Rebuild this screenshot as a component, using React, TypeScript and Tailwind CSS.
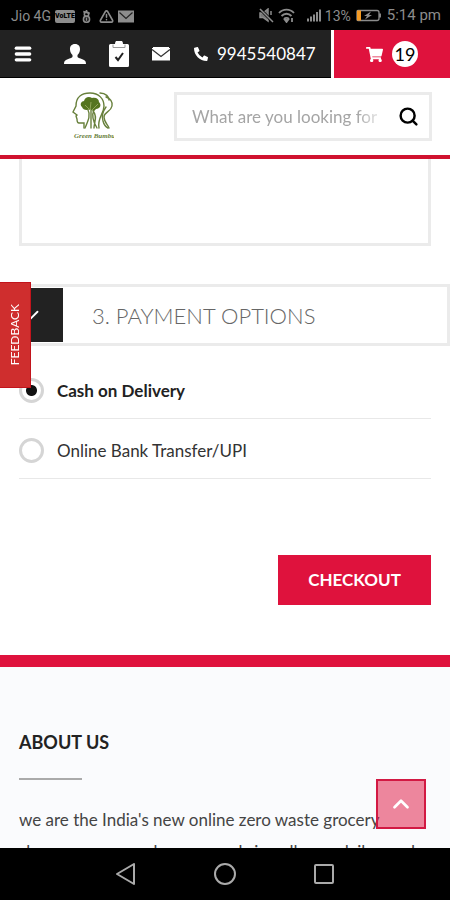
import { Menu, Search, ChevronUp, Check, TriangleAlert } from "lucide-react";
import { FaPhoneAlt, FaShoppingCart } from "react-icons/fa";

function StatusBar() {
  return (
    <div className="flex h-[30px] shrink-0 items-center justify-between bg-black pl-[11px] pr-[9px] pt-[2px] font-[Roboto,sans-serif] text-sm text-[#8c8c8c]">
      <div className="flex items-center">
        <span>Jio 4G</span>
        <span className="ml-1 flex h-[13px] w-5 items-center justify-center rounded-xs bg-[#8c8c8c] text-[7px] font-black text-black">
          VoLTE
        </span>
        <svg className="ml-[6px] h-[13px] w-[11px]" viewBox="0 0 10 12" fill="none" stroke="currentColor" strokeWidth="1.5">
          <path d="M5 0v2M2 1.5 8 3" />
          <circle cx="5" cy="4" r="2" />
          <circle cx="5" cy="8.5" r="2.8" />
          <path d="M5 7v3" />
        </svg>
        <TriangleAlert className="ml-[7px] size-[15px]" strokeWidth={2.5} />
        <svg className="ml-1 h-[13px] w-4" viewBox="0 0 16 12">
          <path d="M0 0h16v12H0z" fill="#8c8c8c" />
          <path d="m1.500 2 6.500 6 6.500-6" fill="none" stroke="#222" strokeWidth="1.2" />
        </svg>
      </div>
      <div className="flex items-center">
        <svg className="h-[15px] w-[15px]" viewBox="0 0 15 15" fill="none" stroke="currentColor" strokeWidth="1.5">
          <path d="M1 5h3l5-4v12L4 9.500H1z" fill="#777" />
          <path d="m1 1 13 13" stroke="#000" strokeWidth="3" />
          <path d="m1 1 13 13M12 3v4" />
        </svg>
        <svg className="ml-1 h-[15px] w-[17px]" viewBox="0 0 17 15" fill="none" stroke="currentColor" strokeWidth="1.8">
          <path d="M1 5C5 .5 12 .5 16 5M3.500 8c3-3 7-3 10 0M6 11c1.500-1.500 3.500-1.500 5 0" />
          <path d="m8.500 14-1.500-2h3zM14 10v4" fill="currentColor" />
        </svg>
        <svg className="ml-3 h-[13px] w-[14px]" viewBox="0 0 14 12" fill="currentColor">
          <path d="M0 9h2v3H0zM3 7h2v5H3zM6 5h2v7H6zM9 2.500h2V12H9zM12 0h2v12h-2z" />
        </svg>
        <span className="ml-1">13%</span>
        <svg className="ml-[5px] h-[13px] w-[25px]" viewBox="0 0 25 12">
          <path
            d="M2 1h19a2 2 0 0 1 2 2v6a2 2 0 0 1-2 2H2a1 1 0 0 1-1-1V2a1 1 0 0 1 1-1zM24.300 4v4"
            fill="none"
            stroke="#8c8c8c"
            strokeWidth="1.3"
          />
          <path d="M1 1h4v10H1z" fill="#f59a23" />
          <path d="M15 2 8 6.500h3L9 10l7-4.500h-3z" fill="#8c8c8c" />
        </svg>
        <span className="ml-[6px] text-[15px]">5:14 pm</span>
      </div>
    </div>
  );
}

function TopBar() {
  return (
    <div className="flex h-12 shrink-0 bg-[#222] text-white">
      <nav className="flex flex-1 items-center border-b border-black pl-[13px]">
        <button aria-label="Menu">
          <Menu size={20} strokeWidth={4} />
        </button>
        <a href="#account" aria-label="Account" className="ml-[31px]">
          <svg className="h-5 w-[22px]" viewBox="0 0 22 20" fill="currentColor">
            <path d="M11 0c3.500 0 5.200 2.300 5 5.500-.1 2.500-1.200 4.200-2.500 5.500v2c1.500 1.300 4.500 2 6.500 3 1.500.8 2 2 2 4H0c0-2 .5-3.200 2-4 2-1 5-1.700 6.500-3v-2C7.200 9.700 6.100 8 6 5.500 5.800 2.300 7.500 0 11 0z" />
          </svg>
        </a>
        <a href="#orders" aria-label="Orders" className="ml-[23px]">
          <svg className="h-[26px] w-5" viewBox="0 0 20 26" fill="currentColor">
            <path d="M1.500 3H6a4 4 0 0 1 8 0h4.500A1.500 1.500 0 0 1 20 4.500v20a1.500 1.500 0 0 1-1.500 1.500h-17A1.500 1.500 0 0 1 0 24.500v-20A1.500 1.500 0 0 1 1.500 3z" />
            <path d="M4 3.500v3h12v-3" fill="none" stroke="#999" />
            <path d="m6.500 16 2.500 3 5-7" fill="none" stroke="#222" strokeWidth="2" />
          </svg>
        </a>
        <a href="#mail" aria-label="Mail" className="ml-[23px]">
          <svg className="h-[14px] w-[18px]" viewBox="0 0 18 14">
            <path d="M1 0h16v1H1zM0 1h18v12.500H0z" fill="#fff" />
            <path d="m0 2.500 9 7 9-7" fill="none" stroke="#333" strokeWidth="1.3" />
          </svg>
        </a>
        <a href="tel:9945540847" className="ml-6 flex items-center gap-[9px] text-[17px]">
          <FaPhoneAlt size={14} className="-scale-x-100 rotate-90" />
          9945540847
        </a>
      </nav>
      <a
        href="#cart"
        aria-label="Cart, 19 items"
        className="flex w-[119px] items-center justify-center gap-[9px] border-l-3 border-white bg-[#df123d]"
      >
        <FaShoppingCart size={17} />
        <span className="flex size-[26px] items-center justify-center rounded-full bg-white text-lg text-black">
          19
        </span>
      </a>
    </div>
  );
}

function Logo() {
  return (
    <svg className="h-[50px] w-[42px] shrink-0" viewBox="0 0 42 50" fill="none" role="img" aria-label="Green Bumbu">
      <g stroke="#68803c" strokeLinecap="round" strokeWidth="1.4">
        <path d="M12 36v-5H7c-2 0-2-2-2-4l-1-3 1-1-4-3 3-6C4 5 10 1 18 1c9 0 14 6 14 13 0 8-7 12-5 22" />
        <path d="M28 1c6 0 9 4 9 7M34 5c4 1 7 5 6 9-1 6-8 6-8 11s4 8 5 11" />
        <path d="M34 15c-3 4-5 8-3 14 1 4 3 6 5 7" />
        <path d="M16 18c3 5 0 11-3 18M19 18v18M22 18c-3 6 0 13 3 18M21 19c5 5 1 12 1 17" />
      </g>
      <path d="M10 15c-3-3 0-6 2-6 1-4 5-5 8-3 4-1 7 1 7 4 3 3 1 7-3 7-2 3-5 1-6 0-3 2-7 1-8-2z" fill="#55751f" />
      <path d="m13 13 5 5 1-8m1 8 6-6" stroke="#91a75a" />
      <text x="2" y="46" fill="#68803c" fontFamily="Liberation Serif, serif" fontSize="7" fontStyle="italic" fontWeight="700">
        Green Bumbu
      </text>
    </svg>
  );
}

function SearchBar() {
  return (
    <header className="flex h-[81px] shrink-0 items-center border-b-4 border-[#d0122f] bg-white pl-[72px] pr-[18px]">
      <Logo />
      <form className="ml-[60px] flex h-[49px] min-w-0 flex-1 items-center border-3 border-[#ebebeb] pl-[15px] pr-[10px]">
        <input
          aria-label="Search"
          placeholder="What are you looking for"
          className="min-w-0 flex-1 mask-r-from-85% text-[17px] outline-none placeholder:text-[#a5a5a5]"
        />
        <button type="button" aria-label="Submit search" className="ml-3">
          <Search size={21} strokeWidth={2.8} className="text-black" />
        </button>
      </form>
    </header>
  );
}

const options = [
  { id: "cod", label: "Cash on Delivery", checked: true },
  { id: "upi", label: "Online Bank Transfer/UPI", checked: false },
];

function Payment() {
  return (
    <section className="relative px-[19px]">
      <textarea
        aria-label="Order notes"
        className="block h-[87px] w-full resize-none border-3 border-t-0 border-[#ebebeb] outline-none"
      />
      <div className="-mr-[19px] mt-[38px] flex h-[62px] items-center border-3 border-[#ebebeb]">
        <div className="flex h-[54px] w-[41px] items-center bg-[#222] pl-[3px] text-white">
          <Check size={15} strokeWidth={3} />
        </div>
        <h2 className="ml-[29px] text-[22px] font-light text-[#666]">3. PAYMENT OPTIONS</h2>
      </div>
      <div className="mt-[13px]">
        {options.map((option) => (
          <label
            key={option.id}
            htmlFor={option.id}
            className="flex h-[60px] items-center gap-[13px] border-b border-[#e8e8e8] pt-1 text-[17px] text-[#333] has-checked:font-bold has-checked:text-[#222]"
          >
            <input
              id={option.id}
              type="radio"
              name="payment"
              defaultChecked={option.checked}
              className="size-[25px] appearance-none rounded-full border-3 border-[#d5d5d5] bg-white checked:bg-[radial-gradient(circle,#111_5px,#fff_6px)]"
            />
            {option.label}
          </label>
        ))}
      </div>
      <div className="mt-[76px] flex justify-end">
        <button className="h-[50px] w-[153px] bg-[#df123d] text-[17px] font-bold text-white">CHECKOUT</button>
      </div>
      <button className="absolute left-0 top-[123px] flex h-[106px] w-[31px] items-center justify-center border border-l-0 border-[#c2141c] bg-[#cf2e2e] text-xs text-white">
        <span className="rotate-180 [writing-mode:vertical-rl]">FEEDBACK</span>
      </button>
    </section>
  );
}

function About() {
  return (
    <footer className="mt-[50px] border-t-12 border-[#df123d] bg-[#fafbfd] px-[19px] pt-[61px]">
      <h3 className="text-lg font-bold text-[#222]">ABOUT US</h3>
      <hr className="mt-[22px] w-[63px] border-t-2 border-[#aaa]" />
      <p className="mt-6 text-[17px] leading-8 text-[#444]">
        we are the India's new online zero waste grocery
        <br />
        shop, we are now here so we bring all your daily need
      </p>
    </footer>
  );
}

function NavBar() {
  return (
    <div className="flex h-[52px] shrink-0 items-center justify-center gap-[78px] bg-black text-[#aaa]">
      <button aria-label="Back">
        <svg className="h-[22px] w-5" viewBox="0 0 20 22" fill="none" stroke="currentColor" strokeWidth="2" strokeLinejoin="round">
          <path d="M18 1v20L1 11z" />
        </svg>
      </button>
      <button aria-label="Home" className="size-[22px] rounded-full border-2" />
      <button aria-label="Recent apps" className="size-5 rounded-xs border-2" />
    </div>
  );
}

export default function App() {
  return (
    <div className="flex h-screen flex-col overflow-hidden bg-white font-[Lato,sans-serif]">
      <StatusBar />
      <TopBar />
      <SearchBar />
      <main className="relative min-h-0 flex-1 overflow-hidden">
        <Payment />
        <About />
        <button
          aria-label="Back to top"
          className="absolute bottom-[19px] right-6 flex size-[50px] items-center justify-center border-2 border-[#d21943] bg-[#df123d]/50 text-white"
        >
          <ChevronUp size={26} strokeWidth={2.5} />
        </button>
      </main>
      <NavBar />
    </div>
  );
}
